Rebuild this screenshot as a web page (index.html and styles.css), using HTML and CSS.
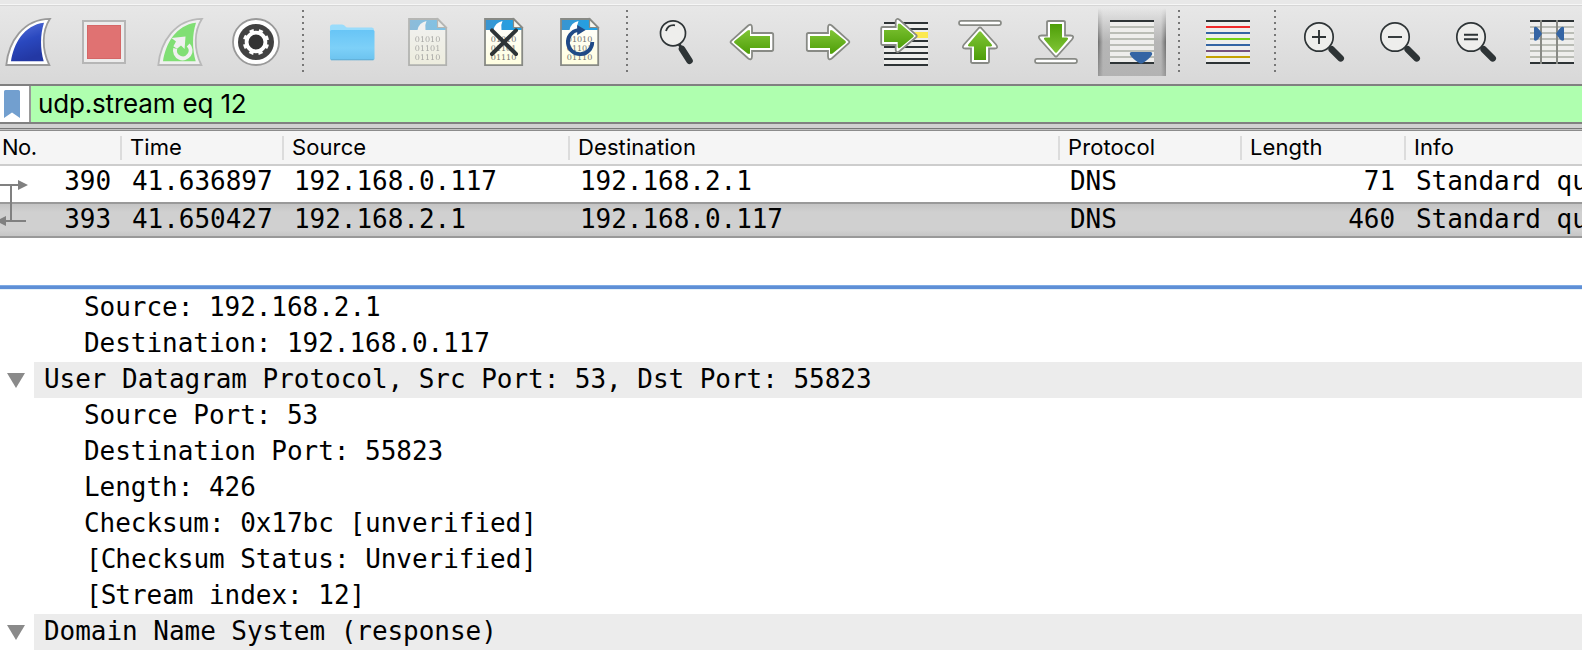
FILE: index.html
```html
<!DOCTYPE html>
<html lang="en">
<head>
<meta charset="utf-8">
<title>Packet capture</title>
<link rel="stylesheet" href="styles.css">
</head>
<body>
<svg class="defs" width="0" height="0">
  <defs>
    <linearGradient id="blue" x1="0" y1="0" x2="0.3" y2="1"><stop offset="0" stop-color="#5a74dc"/><stop offset=".55" stop-color="#2a48bf"/><stop offset="1" stop-color="#2338a4"/></linearGradient>
    <linearGradient id="green" x1="0" y1="0" x2="0" y2="1"><stop offset="0" stop-color="#80c536"/><stop offset="1" stop-color="#4e9e08"/></linearGradient>
    <linearGradient id="sky" x1="0" y1="0" x2="0" y2="1"><stop offset="0" stop-color="#68c5f6"/><stop offset=".6" stop-color="#7dd0f8"/><stop offset="1" stop-color="#6cc3ef"/></linearGradient>
    <linearGradient id="paper" x1="0" y1="0" x2="0" y2="1"><stop offset="0" stop-color="#fff"/><stop offset="1" stop-color="#fffee0"/></linearGradient>
    <linearGradient id="band" x1="0" y1="0" x2="1" y2="0"><stop offset="0" stop-color="#3b94cf"/><stop offset="1" stop-color="#1ba4ea"/></linearGradient>
    <g id="arrow">
      <path d="M17.2 40.8 L34 25.8 Q37.8 23 38 27.5 V33 H57.5 Q59.2 33 59.2 34.7 V49.3 Q59.2 51 57.5 51 H38 V56.5 Q37.8 61 34 58.2 L17.2 43.2 Q16 42 17.2 40.8Z" fill="#fff" stroke="#888a85" stroke-width="1.8"/>
      <path d="M20.5 41 L33.5 30.4 Q36.3 29 36 31.8 V36 H56 V48 H36 V52.2 Q36.3 55 33.5 53.6 L20.5 43 Q19.6 42 20.5 41Z" fill="url(#green)"/>
    </g>
    <g id="arrow-up">
      <path d="M36.8 28 L22 44.5 Q19 48.5 23.5 48.5 H29 V61.5 Q29 63 30.7 63 H45.3 Q47 63 47 61.5 V48.5 H52.5 Q57 48.5 54 44.5 L39.2 28 Q38 26.8 36.8 28Z" fill="#fff" stroke="#888a85" stroke-width="1.8"/>
      <path d="M37 31.8 L26.4 44.3 Q25 46.6 28 46.4 H32 V60 H44 V46.4 H48 Q51 46.6 49.6 44.3 L39 31.8 Q38 30.8 37 31.8Z" fill="url(#green)"/>
    </g>
    <g id="doc">
      <path d="M19 19 H48 L56.2 27.5 V65 H19Z" fill="url(#paper)"/>
      <path d="M19 19 H48 L56 27.5 V30 H19Z" fill="url(#band)"/>
      <path d="M27.5 30 Q29 22.5 36.5 21 Q34.5 25 35.5 30Z" fill="#fff"/>
      <path d="M47.5 18.8 L56.2 27.5 H47.5Z" fill="#f7f7ef" stroke="#888a85" stroke-width="1.2"/>
      <g class="bits"><text x="24.8" y="42.2" textLength="25.5" lengthAdjust="spacingAndGlyphs">01010</text><text x="24.8" y="51.2" textLength="25.5" lengthAdjust="spacingAndGlyphs">01101</text><text x="24.8" y="60.2" textLength="25.5" lengthAdjust="spacingAndGlyphs">01110</text></g>
      <path d="M19 19 H47.7 L56.2 27.5 V65.2 H19Z" fill="none" stroke="#888a85" stroke-width="1.8"/>
    </g>
    <g id="zoomer">
      <path d="M45.7 49.3 L54.7 58.3" stroke="#2e3436" stroke-width="6.6" stroke-linecap="round"/>
      <circle cx="33" cy="37" r="14.2" fill="#eeeeec" stroke="#2e3436" stroke-width="1.7"/>
    </g>
  </defs>
</svg>

<div class="toolbar">
  <svg class="tool" viewBox="0 6 76 78"><path d="M16.3 65 C18.5 42 33 19 60 18.8 C52 31 51.5 49 59.3 65Z" fill="#fff" stroke="#9a9a9a" stroke-width="1.8"/><path d="M21 61.2 C23.5 44 34 25 54 22.8 C50 35 50.3 49 53.7 61.2Z" fill="url(#blue)"/></svg>
  <svg class="tool" viewBox="0 6 76 78"><rect x="17" y="21" width="42" height="42" fill="#ececec" stroke="#b6b6b6" stroke-width="2"/><rect x="21" y="25" width="34" height="34" fill="#e07272"/><rect x="21.5" y="25.5" width="33" height="33" fill="none" stroke="#d56666"/></svg>
  <svg class="tool" viewBox="0 6 76 78"><path d="M16.3 65 C18.5 42 33 19 60 18.8 C52 31 51.5 49 59.3 65Z" fill="#f0f0f0" stroke="#b9b9b9" stroke-width="1.8"/><path d="M21 61.2 C23.5 44 34 25 54 22.8 C50 35 50.3 49 53.7 61.2Z" fill="#80df74"/><path d="M46.2 45 A7.8 7.8 0 1 1 33.2 48.6" fill="none" stroke="#f0f0f0" stroke-width="4"/><path d="M29.5 38 L43.5 36.6 L42.6 49 L39 45.4 L35 48.8 L31.4 46.2 L34 41.6Z" fill="#f0f0f0"/></svg>
  <svg class="tool" viewBox="0 6 76 78"><circle cx="38" cy="42" r="23" fill="#fff" stroke="#999" stroke-width="1.8"/><circle cx="38" cy="42" r="18" fill="#424242"/><circle cx="38" cy="42" r="9.4" fill="#333" stroke="#fff" stroke-width="3.8"/><circle cx="38" cy="42" r="11.7" fill="none" stroke="#fff" stroke-width="3" stroke-dasharray="4.2 4.989" transform="rotate(12 38 42)"/></svg>
  <span class="sep"></span>
  <svg class="tool" viewBox="0 6 76 78"><path d="M16 59 V27 Q16 24.5 18.5 24.5 H28 Q30 24.5 31 26 Q32 27.5 34 27.5 H58 Q60 27.5 60 30 V59Z" fill="#9adcfb"/><rect x="16" y="30" width="44.5" height="30" rx="1.5" fill="url(#sky)"/><path d="M17 59.8 H59.5" stroke="#60acd2"/></svg>
  <svg class="tool faded" viewBox="0 6 76 78"><use href="#doc"/></svg>
  <svg class="tool" viewBox="0 6 76 78"><use href="#doc"/><path d="M26 30.3 L50 54 M50 30.3 L26 54" stroke="#2e3436" stroke-width="4" stroke-linecap="round"/></svg>
  <svg class="tool" viewBox="0 6 76 78"><use href="#doc"/><path d="M36 30 A12.2 12.2 0 1 0 50.3 42" fill="none" stroke="#204a87" stroke-width="3.8"/><path d="M35.2 25 L43.6 30 L35.2 35.2Z" fill="#204a87"/></svg>
  <span class="sep"></span>
  <svg class="tool" viewBox="0 6 76 78"><path d="M41 44 L43.5 48" stroke="#2e3436" stroke-width="3"/><path d="M44 49 L51.5 60.8" stroke="#2e3436" stroke-width="6.6" stroke-linecap="round"/><circle cx="35" cy="33.3" r="12.5" fill="#eeeeec" stroke="#2e3436" stroke-width="1.7"/><path d="M28 31 Q30 24.5 37 25.3" fill="none" stroke="#2e3436" stroke-width="1.8"/></svg>
  <svg class="tool" viewBox="0 6 76 78"><use href="#arrow"/></svg>
  <svg class="tool" viewBox="0 6 76 78"><use href="#arrow" transform="translate(76 0) scale(-1 1)"/></svg>
  <svg class="tool" viewBox="0 6 76 78"><path d="M18 22H62V66H18Z" fill="#eeeeec"/><path d="M18 32H62V38H18Z" fill="#fce94f"/><path d="M18 23H62M18 29H62M18 41H62M18 47H62M18 53H62M18 59H62M18 65H62" stroke="#2e3436" stroke-width="2"/><path d="M15.2 28.3 Q15.2 27 16.7 27 H29.7 V21 Q30.2 17.5 33.8 20 L50 34.8 Q51.5 36 50 37.2 L33.8 51 Q30.2 53.5 29.7 50 V45 H16.7 Q15.2 45 15.2 43.5Z" fill="#fff" stroke="#888a85" stroke-width="1.8"/><path d="M18 30H31.7V25Q32 22.5 34.5 24L47.3 35Q48.4 36 47.3 37L34.5 47.5Q32 49 31.7 47V42H18Z" fill="url(#green)"/></svg>
  <svg class="tool" viewBox="0 6 76 78"><use href="#arrow-up"/><rect x="17" y="20.8" width="42" height="4.4" rx="2.2" fill="#fff" stroke="#888a85" stroke-width="1.7"/></svg>
  <svg class="tool" viewBox="0 6 76 78"><use href="#arrow-up" transform="translate(0 84) scale(1 -1)"/><rect x="17" y="58.8" width="42" height="4.4" rx="2.2" fill="#fff" stroke="#888a85" stroke-width="1.7"/></svg>
  <span class="pressed"><svg class="tool" viewBox="0 6 76 78"><path d="M16 20H60V64H16Z" fill="#eeeeec"/><path d="M16 27H60M16 33H60M16 39H60M16 45H60M16 51H60M16 57H60" stroke="#babdb6" stroke-width="2"/><path d="M16 21H60M16 63H60" stroke="#2e3436" stroke-width="2"/><path d="M37.5 52 H56.5 Q58.8 52.5 58 54.8 Q55 59.5 48.5 63.2 Q47 64 45.5 63.2 Q39 59.5 36 54.8 Q35.2 52.5 37.5 52Z" fill="#3465a4"/></svg></span>
  <span class="sep"></span>
  <svg class="tool" viewBox="0 6 76 78"><path d="M16 20H60V64H16Z" fill="#eeeeec"/><g stroke-width="2"><path d="M16 21H60M16 63H60" stroke="#2e3436"/><path d="M16 27H60" stroke="#ef2929"/><path d="M16 33H60M16 45H60" stroke="#3465a4"/><path d="M16 39H60" stroke="#73d216"/><path d="M16 51H60" stroke="#75507b"/><path d="M16 57H60" stroke="#c4a000"/></g></svg>
  <span class="sep"></span>
  <svg class="tool" viewBox="0 6 76 78"><use href="#zoomer"/><path d="M26 37H40M33 30V44" stroke="#2e3436" stroke-width="1.9"/></svg>
  <svg class="tool" viewBox="0 6 76 78"><use href="#zoomer"/><path d="M26 37H40" stroke="#2e3436" stroke-width="1.9"/></svg>
  <svg class="tool" viewBox="0 6 76 78"><use href="#zoomer"/><path d="M26 34.8H40M26 39.2H40" stroke="#2e3436" stroke-width="1.9"/></svg>
  <svg class="tool" viewBox="0 6 76 78"><path d="M16 20H60V64H16Z" fill="#eeeeec"/><path d="M16 27H60M16 33H60M16 39H60M16 45H60M16 51H60M16 57H60" stroke="#babdb6" stroke-width="2"/><path d="M16 21H60M16 63H60" stroke="#2e3436" stroke-width="2"/><path d="M27 20V64M43 20V64" stroke="#888a85" stroke-width="2"/><path d="M20 27.5Q21 26.3 23 27.3Q25 29 28 33.7Q25 38.5 23 40.3Q21 41.2 20 40ZM50 27.5Q49 26.3 47 27.3Q45 29 42 33.7Q45 38.5 47 40.3Q49 41.2 50 40Z" fill="#3465a4"/></svg>
</div>

<div class="filter">
  <span class="bookmark"><svg width="16" height="28" viewBox="0 0 16 28"><path d="M0 1.5Q0 0 1.5 0H14.5Q16 0 16 1.5V28L8 22.5L0 28Z" fill="#729fcf"/></svg></span>
  <span class="query">udp.stream eq 12</span>
</div>
<div class="splitter"></div>

<div class="packets">
  <div class="row head">
    <span>No.</span><span>Time</span><span>Source</span><span>Destination</span><span>Protocol</span><span>Length</span><span>Info</span>
  </div>
  <div class="row">
    <span class="num">390</span><span>41.636897</span><span>192.168.0.117</span><span>192.168.2.1</span><span>DNS</span><span class="num">71</span><span>Standard qu</span>
  </div>
  <div class="row selected">
    <span class="num">393</span><span>41.650427</span><span>192.168.2.1</span><span>192.168.0.117</span><span>DNS</span><span class="num">460</span><span>Standard qu</span>
  </div>
  <svg class="related" width="30" height="72" viewBox="0 166 30 72"><path d="M0 185H19M11 185V221M5 221H26" fill="none" stroke="#808080" stroke-width="2"/><path d="M18 180L28 185L18 190ZM6 216L-4 221L6 226Z" fill="#808080"/></svg>
</div>

<div class="details">
  <div class="field">Source: 192.168.2.1</div>
  <div class="field">Destination: 192.168.0.117</div>
  <div class="proto"><i class="caret"></i><span>User Datagram Protocol, Src Port: 53, Dst Port: 55823</span></div>
  <div class="field">Source Port: 53</div>
  <div class="field">Destination Port: 55823</div>
  <div class="field">Length: 426</div>
  <div class="field">Checksum: 0x17bc [unverified]</div>
  <div class="field bracket">[Checksum Status: Unverified]</div>
  <div class="field bracket">[Stream index: 12]</div>
  <div class="proto"><i class="caret"></i><span>Domain Name System (response)</span></div>
</div>
</body>
</html>
```

FILE: styles.css
```css
* { box-sizing: border-box; }
body {
  margin: 0;
  width: 1582px;
  height: 654px;
  overflow: hidden;
  background: #fff;
  color: #000;
  font-family: "DejaVu Sans Mono", monospace;
  font-size: 26px;
  letter-spacing: -0.04px;
}
.defs { position: absolute; }
.toolbar {
  display: flex;
  height: 86px;
  padding-top: 6px;
  overflow: hidden;
  border-bottom: 2px solid #808080;
  background: linear-gradient(#e8e8e8 0 4px, #f6f6f6 4px 5px, #d6d6d6 5px 6px, #e7e7e7 6px, #d8d8d8 84px);
}
.tool { flex: 0 0 76px; width: 76px; height: 78px; display: block; }
.toolbar > .tool:first-child { margin-left: -10px; }
.faded { opacity: .5; }
.bits text { font: 7.8px "DejaVu Serif", serif; fill: #72726e; }
.sep {
  flex: 0 0 20px;
  height: 62px;
  margin-top: 4px;
  background: repeating-linear-gradient(#777 0 2px, transparent 2px 6px) 8px 0 / 2px 62px no-repeat;
}
.pressed {
  position: relative;
  flex: 0 0 76px;
  background: linear-gradient(#0000, #9999 50%, #9999) 4px 2px / 68px 68px no-repeat;
}
.pressed::before {
  content: "";
  position: absolute;
  left: 4px;
  top: 2px;
  width: 68px;
  height: 68px;
  background: linear-gradient(90deg, #0006, #0000 5px, #0000 63px, #0006);
  mask-image: linear-gradient(transparent, #000 50%, #0006);
}
.pressed .tool { position: relative; }
.filter {
  display: flex;
  height: 38px;
  background: #afffaf;
  border-bottom: 2px solid #808080;
}
.bookmark {
  width: 31px;
  height: 36px;
  padding: 4px 0 0 4px;
  background: #fff;
  border-right: 2px solid #999;
}
.bookmark svg { display: block; }
.query {
  padding-left: 7px;
  font: 26px/36px Inter, sans-serif;
  letter-spacing: -0.17px;
}
.splitter {
  height: 7px;
  background: linear-gradient(#d0d0d0 0 4px, #777 4px 5px, #c0c0c0 5px 6px, #8c8c8c 6px 7px);
}
.packets {
  position: relative;
  height: 154px;
}
.row {
  display: grid;
  grid-template-columns: 122px 162px 286px 490px 182px 164px 176px;
  height: 36px;
  line-height: 31px;
  white-space: nowrap;
}
.row span { padding-left: 10px; }
.row .num { padding: 0 11px 0 0; text-align: right; }
.head {
  height: 35px;
  padding-top: 5px;
  background: #f5f5f5;
  border-bottom: 2px solid #cdcdcd;
  font: 22px/22px Inter, sans-serif;
  letter-spacing: 0.1px;
}
.head span { height: 24px; padding-left: 8px; border-right: 2px solid #dcdcdc; }
.head span:first-child { padding-left: 2px; letter-spacing: -0.5px; }
.head span:last-child { border: 0; }
.selected {
  border: solid #999;
  border-width: 2px 0;
  background: linear-gradient(#c4c4c4, #d0d0d0 8px, #d0d0d0 26px, #c6c6c6);
}
.related { position: absolute; left: 0; top: 35px; }
.details {
  height: 369px;
  padding-top: 5px;
  background: linear-gradient(#7fabe4 0 1px, #5f8fd6 1px 4px, #e4f0f8 4px 5px, #fff 5px);
  white-space: nowrap;
  line-height: 34px;
}
.field { height: 36px; padding-left: 84px; }
.bracket::first-letter { margin-left: 2px; letter-spacing: -1px; }
.proto { display: flex; height: 36px; }
.proto span { flex: 1; padding-left: 10px; background: #ececec; }
.caret {
  width: 18px;
  height: 15px;
  margin: 11px 9px 0 7px;
  background: #8a8a8a;
  clip-path: polygon(0 0, 100% 0, 50% 100%);
}
```
